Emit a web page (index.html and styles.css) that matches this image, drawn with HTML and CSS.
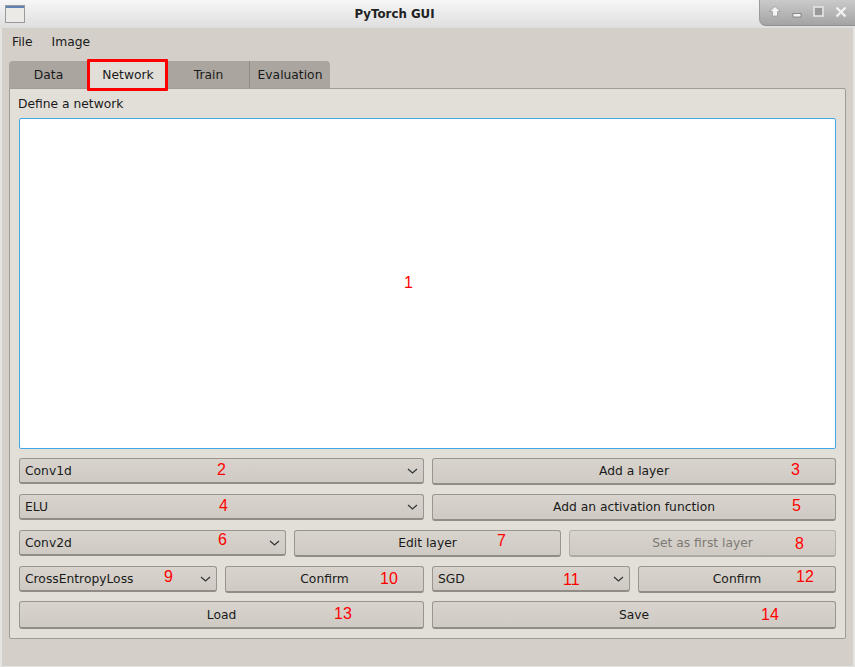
FILE: index.html
```html
<!DOCTYPE html>
<html>
<head>
    <title>PyTorch GUI</title>
    <link rel="stylesheet" href="styles.css">
</head>
<body>
    <div class="titlebar">
        <svg class="win-icon" width="20" height="18" viewBox="0 0 20 18">
            <rect x="0.5" y="0.5" width="19" height="17" fill="#eceae6" stroke="#9a9a9a"/>
            <rect x="1" y="1" width="18" height="2" fill="#5f83b5"/>
        </svg>
        <div class="title">PyTorch GUI</div>
        <div class="win-buttons">
            <svg width="12" height="11" viewBox="0 0 12 11"><path d="M6 0.5 L11.5 5.5 L8.5 5.5 L8.5 10 L3.5 10 L3.5 5.5 L0.5 5.5 Z" fill="#f4f4f4" stroke="#8c8c8c" stroke-width="0.6"/></svg>
            <svg width="10" height="12" viewBox="0 0 10 12"><rect x="1" y="7.5" width="8" height="3.5" fill="#f4f4f4" stroke="#777" stroke-width="0.8"/></svg>
            <svg width="11" height="11" viewBox="0 0 11 11"><rect x="1" y="1" width="9" height="9" fill="#999" stroke="#e6e6e6" stroke-width="1.6"/></svg>
            <svg width="12" height="12" viewBox="0 0 12 12"><path d="M1.5 1.5 L10.5 10.5 M10.5 1.5 L1.5 10.5" stroke="#f2f2f2" stroke-width="2.4"/></svg>
        </div>
    </div>

    <div class="window">
        <div class="menubar">
            <span class="menu-item">File</span>
            <span class="menu-item">Image</span>
        </div>

        <div class="tabs">
            <div class="tab tab-data">Data</div>
            <div class="tab tab-active">Network</div>
            <div class="tab tab-train">Train</div>
            <div class="tab tab-eval">Evaluation</div>
        </div>

        <div class="pane">
            <div class="pane-label">Define a network</div>
            <div class="editor"></div>

            <div class="row row-two">
                <div class="combo">Conv1d<svg class="arrow" width="11" height="6" viewBox="0 0 11 6"><path d="M1 1 L5.5 5 L10 1" fill="none" stroke="#333" stroke-width="1.2"/></svg></div>
                <div class="btn">Add a layer</div>
            </div>
            <div class="row row-two">
                <div class="combo">ELU<svg class="arrow" width="11" height="6" viewBox="0 0 11 6"><path d="M1 1 L5.5 5 L10 1" fill="none" stroke="#333" stroke-width="1.2"/></svg></div>
                <div class="btn">Add an activation function</div>
            </div>
            <div class="row row-three">
                <div class="combo">Conv2d<svg class="arrow" width="11" height="6" viewBox="0 0 11 6"><path d="M1 1 L5.5 5 L10 1" fill="none" stroke="#333" stroke-width="1.2"/></svg></div>
                <div class="btn">Edit layer</div>
                <div class="btn btn-disabled">Set as first layer</div>
            </div>
            <div class="row row-four">
                <div class="combo">CrossEntropyLoss<svg class="arrow" width="11" height="6" viewBox="0 0 11 6"><path d="M1 1 L5.5 5 L10 1" fill="none" stroke="#333" stroke-width="1.2"/></svg></div>
                <div class="btn">Confirm</div>
                <div class="combo">SGD<svg class="arrow" width="11" height="6" viewBox="0 0 11 6"><path d="M1 1 L5.5 5 L10 1" fill="none" stroke="#333" stroke-width="1.2"/></svg></div>
                <div class="btn">Confirm</div>
            </div>
            <div class="row row-two row-last">
                <div class="btn">Load</div>
                <div class="btn">Save</div>
            </div>
        </div>
    </div>

    <!-- annotations on top of the screenshot -->
    <div class="highlight"></div>
    <span class="num n1">1</span>
    <span class="num n2">2</span>
    <span class="num n3">3</span>
    <span class="num n4">4</span>
    <span class="num n5">5</span>
    <span class="num n6">6</span>
    <span class="num n7">7</span>
    <span class="num n8">8</span>
    <span class="num n9">9</span>
    <span class="num n10">10</span>
    <span class="num n11">11</span>
    <span class="num n12">12</span>
    <span class="num n13">13</span>
    <span class="num n14">14</span>
</body>
</html>
```

FILE: styles.css
```css
html, body {
    margin: 0;
    padding: 0;
}

body {
    position: relative;
    width: 855px;
    height: 667px;
    overflow: hidden;
    background-color: #e6e4e0;
    font-family: "DejaVu Sans", sans-serif;
    font-size: 12.3px;
    color: #1a1a1a;
}

.titlebar {
    position: relative;
    height: 28px;
    box-sizing: border-box;
    padding: 0 66px 0 0;
    background: linear-gradient(to bottom, #f6f6f6, #dedede);
    display: flex;
    align-items: center;
    justify-content: center;
}

.win-icon {
    position: absolute;
    left: 5px;
    top: 5px;
}

.title {
    font-weight: bold;
    font-size: 11.8px;
    color: #222;
}

.win-buttons {
    position: absolute;
    right: 0;
    top: 0;
    width: 96px;
    height: 26px;
    box-sizing: border-box;
    padding: 0 8px 2px 9px;
    display: flex;
    align-items: center;
    justify-content: space-between;
    background: linear-gradient(to bottom, #cacaca, #a4a4a4);
    border-bottom-left-radius: 7px;
    border-bottom: 1px solid #8f8f8f;
    border-left: 1px solid #9a9a9a;
}

.window {
    margin: 0 2px;
    height: 638px;
    background-color: #d4d0c9;
    display: flex;
    flex-direction: column;
}

.menubar {
    height: 33px;
    padding: 0 0 6px 10px;
    box-sizing: border-box;
    display: flex;
    align-items: center;
    gap: 19px;
}

.tabs {
    display: flex;
    height: 27px;
    margin-left: 7px;
}

.tab {
    box-sizing: border-box;
    display: flex;
    align-items: center;
    justify-content: center;
    height: 27px;
    background-color: #aaa69f;
    border-right: 1px solid #8f8b84;
}

.tab-data {
    width: 79px;
    border-radius: 4px 0 0 0;
    border-right: none;
}

.tab-active {
    width: 80px;
    background-color: #e2dfd9;
    border-right: none;
}

.tab-train {
    width: 82px;
}

.tab-eval {
    width: 80px;
    border-right: none;
    border-radius: 0 4px 0 0;
}

.pane {
    box-sizing: border-box;
    height: 551px;
    margin: 0 7px;
    padding: 6px 9px 0 8px;
    background-color: #e2dfd9;
    border: 1px solid #a09c95;
    border-radius: 0 2px 2px 2px;
}

.pane-label {
    height: 18px;
    line-height: 18px;
    margin-bottom: 5px;
}

.editor {
    box-sizing: border-box;
    height: 331px;
    margin: 0 0 9px 1px;
    background-color: #fff;
    border: 1px solid #43a9e6;
    border-radius: 2px;
}

.row {
    display: grid;
    height: 27px;
    gap: 8px;
    margin: 0 0 9px 1px;
}

.row-two {
    grid-template-columns: 405px 404px;
}

.row-three {
    grid-template-columns: 267px 267px 267px;
}

.row-four {
    grid-template-columns: 198px 199px 198px 198px;
}

.row-last {
    height: 28px;
    margin-top: -1px;
}

.combo,
.btn {
    box-sizing: border-box;
    display: flex;
    align-items: center;
    background: linear-gradient(to bottom, #d8d4cd, #cfcbc4);
    border: 1px solid #9a968f;
    border-bottom: 2px solid #918d86;
    border-radius: 3px;
    white-space: nowrap;
}

.combo {
    height: 26px;
    padding: 0 5px;
    justify-content: space-between;
}

.btn {
    justify-content: center;
    padding-bottom: 1px;
}

.row-last .btn {
    padding-bottom: 0;
}

.btn-disabled {
    color: #7d7a75;
    border-color: #b5b1aa;
    border-bottom-color: #aeaaa3;
}

.highlight {
    position: absolute;
    left: 87px;
    top: 59px;
    width: 75px;
    height: 26px;
    border: 3px solid #f00;
    border-radius: 1px;
}

.num {
    position: absolute;
    font-family: "Liberation Sans", sans-serif;
    font-size: 16px;
    line-height: 18px;
    color: #f00;
}

.n1 { left: 404px; top: 274px; }
.n2 { left: 217px; top: 461px; }
.n3 { left: 791px; top: 461px; }
.n4 { left: 219px; top: 497px; }
.n5 { left: 792px; top: 497px; }
.n6 { left: 218px; top: 531px; }
.n7 { left: 497px; top: 532px; }
.n8 { left: 795px; top: 535px; }
.n9 { left: 164px; top: 568px; }
.n10 { left: 380px; top: 570px; }
.n11 { left: 563px; top: 571px; }
.n12 { left: 796px; top: 568px; }
.n13 { left: 334px; top: 605px; }
.n14 { left: 761px; top: 606px; }
```
